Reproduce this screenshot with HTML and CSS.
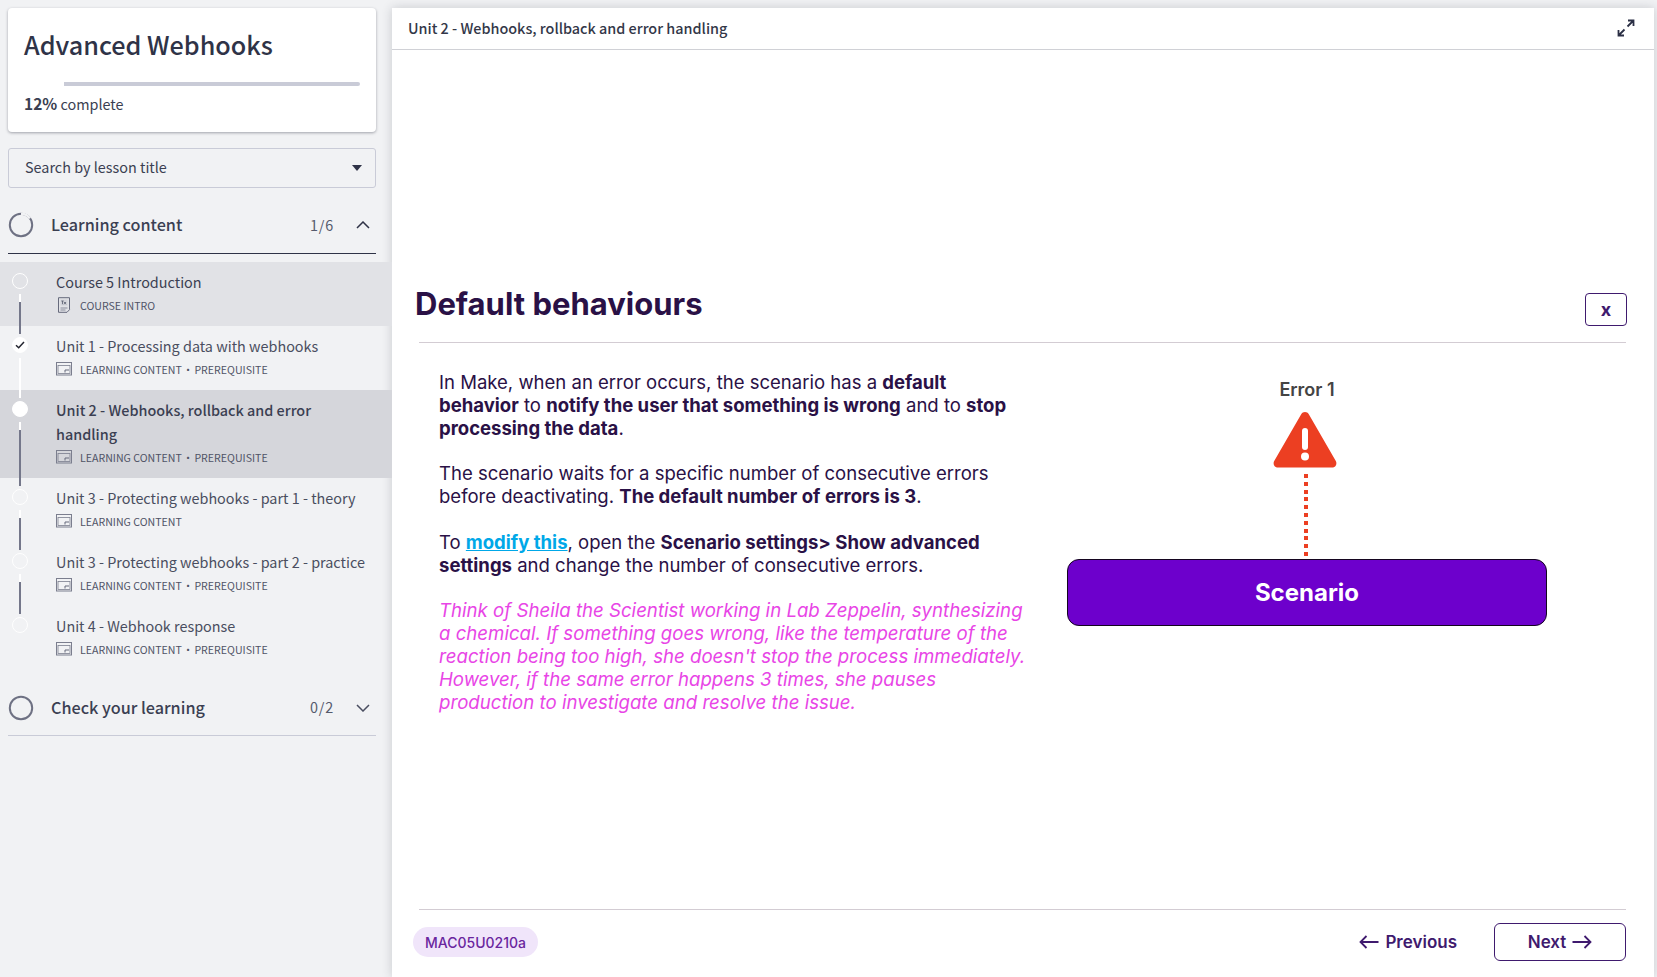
FILE: index.html
```html
<!DOCTYPE html>
<html lang="en">
<head>
<meta charset="utf-8">
<title>Advanced Webhooks</title>
<link rel="stylesheet" href="styles.css">
</head>
<body>
<aside class="sidebar">
  <section class="course-card">
    <h1 class="course-title">Advanced Webhooks</h1>
    <div class="progress"><div class="progress-fill"></div></div>
    <p class="progress-text"><b>12%</b> complete</p>
  </section>
  <div class="search">
    <span class="search-label">Search by lesson title</span>
    <svg class="caret" width="10" height="6" viewBox="0 0 10 6"><path d="M0 0h10L5 6z" fill="#2f3347"/></svg>
  </div>
  <div class="section-head section-open">
    <svg class="ring" width="26" height="26" viewBox="0 0 26 26"><circle cx="13" cy="13" r="11.2" fill="none" stroke="#6e7183" stroke-width="2"/><path d="M13 1.8A11.2 11.2 0 0 1 22 6.4" fill="none" stroke="#f1f2f4" stroke-width="2.4"/></svg>
    <span class="section-name">Learning content</span>
    <span class="section-count">1/6</span>
    <svg class="chev" width="14" height="8" viewBox="0 0 14 8"><path d="M1 7l6-6 6 6" fill="none" stroke="#2f3347" stroke-width="1.5"/></svg>
  </div>
  <ul class="lessons">
    <li class="lesson lesson-hover line-gray">
      <span class="dot"></span>
      <div class="lesson-title">Course 5 Introduction</div>
      <div class="lesson-meta">
        <svg class="meta-icon" width="16" height="16" viewBox="0 0 16 16"><path d="M2.5.7h11v12l-2.5 2.6H2.500z" fill="none" stroke="#666a7c"/><path d="M4.500 11h7M4.500 13h5" stroke="#8a8d9c"/><rect x="4.500" y="2.500" width="7" height="6" fill="#d3d4da"/><path d="M5.300 4h2.400M6.500 4v3.200M8 5l2 2.300M10 5l-2 2.300" stroke="#555a6c" stroke-width=".8"/></svg>
        <span>COURSE INTRO</span>
      </div>
    </li>
    <li class="lesson line-white">
      <span class="dot dot-done"><svg width="10" height="8" viewBox="0 0 10 8"><path d="M1 4.200l2.700 2.600L9 1" fill="none" stroke="#22242f" stroke-width="1.500"/></svg></span>
      <div class="lesson-title lesson-done">Unit 1 - Processing data with webhooks</div>
      <div class="lesson-meta">
        <svg class="meta-icon" width="16" height="14" viewBox="0 0 16 14"><rect x=".5" y=".5" width="15" height="12.500" fill="none" stroke="#7b7e8e"/><rect x="2" y="3.500" width="12" height="8" fill="none" stroke="#7b7e8e" stroke-width=".8"/><path d="M9 10.500V8h4" fill="none" stroke="#666a7c"/></svg>
        <span>LEARNING CONTENT<span class="sep">·</span>PREREQUISITE</span>
      </div>
    </li>
    <li class="lesson lesson-current line-gray">
      <span class="dot dot-current"></span>
      <div class="lesson-title lesson-strong">Unit 2 - Webhooks, rollback and error handling</div>
      <div class="lesson-meta">
        <svg class="meta-icon" width="16" height="14" viewBox="0 0 16 14"><rect x=".5" y=".5" width="15" height="12.500" fill="none" stroke="#7b7e8e"/><rect x="2" y="3.500" width="12" height="8" fill="none" stroke="#7b7e8e" stroke-width=".8"/><path d="M9 10.500V8h4" fill="none" stroke="#666a7c"/></svg>
        <span>LEARNING CONTENT<span class="sep">·</span>PREREQUISITE</span>
      </div>
    </li>
    <li class="lesson line-gray">
      <span class="dot"></span>
      <div class="lesson-title">Unit 3 - Protecting webhooks - part 1 - theory</div>
      <div class="lesson-meta">
        <svg class="meta-icon" width="16" height="14" viewBox="0 0 16 14"><rect x=".5" y=".5" width="15" height="12.500" fill="none" stroke="#7b7e8e"/><rect x="2" y="3.500" width="12" height="8" fill="none" stroke="#7b7e8e" stroke-width=".8"/><path d="M9 10.500V8h4" fill="none" stroke="#666a7c"/></svg>
        <span>LEARNING CONTENT</span>
      </div>
    </li>
    <li class="lesson line-gray">
      <span class="dot"></span>
      <div class="lesson-title">Unit 3 - Protecting webhooks - part 2 - practice</div>
      <div class="lesson-meta">
        <svg class="meta-icon" width="16" height="14" viewBox="0 0 16 14"><rect x=".5" y=".5" width="15" height="12.500" fill="none" stroke="#7b7e8e"/><rect x="2" y="3.500" width="12" height="8" fill="none" stroke="#7b7e8e" stroke-width=".8"/><path d="M9 10.500V8h4" fill="none" stroke="#666a7c"/></svg>
        <span>LEARNING CONTENT<span class="sep">·</span>PREREQUISITE</span>
      </div>
    </li>
    <li class="lesson">
      <span class="dot"></span>
      <div class="lesson-title">Unit 4 - Webhook response</div>
      <div class="lesson-meta">
        <svg class="meta-icon" width="16" height="14" viewBox="0 0 16 14"><rect x=".5" y=".5" width="15" height="12.500" fill="none" stroke="#7b7e8e"/><rect x="2" y="3.500" width="12" height="8" fill="none" stroke="#7b7e8e" stroke-width=".8"/><path d="M9 10.500V8h4" fill="none" stroke="#666a7c"/></svg>
        <span>LEARNING CONTENT<span class="sep">·</span>PREREQUISITE</span>
      </div>
    </li>
  </ul>
  <div class="section-head section-closed">
    <svg class="ring" width="26" height="26" viewBox="0 0 26 26"><circle cx="13" cy="13" r="11.2" fill="none" stroke="#6e7183" stroke-width="2"/></svg>
    <span class="section-name">Check your learning</span>
    <span class="section-count">0/2</span>
    <svg class="chev" width="14" height="8" viewBox="0 0 14 8"><path d="M1 1l6 6 6-6" fill="none" stroke="#4a4e60" stroke-width="1.500"/></svg>
  </div>
</aside>

<main class="viewer">
  <header class="viewer-head">
    <span class="viewer-title">Unit 2 - Webhooks, rollback and error handling</span>
    <svg class="expand" width="18" height="18" viewBox="0 0 18 18"><path d="M10.500 7.500L16 2M11 1.500h5.500V7M7.500 10.500L2 16M7 16.500H1.500V11" fill="none" stroke="#2b2f45" stroke-width="1.800"/></svg>
  </header>
  <div class="slide">
    <div class="slide-head">
      <h2 class="slide-title">Default behaviours</h2>
      <button class="close-btn">x</button>
    </div>
    <div class="slide-body">
      <div class="copy">
        <p>In Make, when an error occurs, the scenario has a <b>default behavior</b> to <b>notify the user that something is wrong</b> and to <b>stop processing the data</b>.</p>
        <p>The scenario waits for a specific number of consecutive errors before deactivating. <b>The default number of errors is 3</b>.</p>
        <p>To <a href="#" class="link">modify this</a>, open the <b>Scenario settings&gt; Show advanced settings</b> and change the number of consecutive errors.</p>
        <p class="aside-note">Think of Sheila the Scientist working in Lab Zeppelin, synthesizing a chemical. If something goes wrong, like the temperature of the reaction being too high, she doesn't stop the process immediately. However, if the same error happens 3 times, she pauses production to investigate and resolve the issue.</p>
      </div>
      <div class="diagram">
        <div class="error-label">Error 1</div>
        <svg class="warn" width="64" height="56" viewBox="0 0 64 56"><path d="M28.200 2.200a4.400 4.400 0 0 1 7.600 0l27 46.800a4.400 4.400 0 0 1-3.800 6.600H5a4.400 4.400 0 0 1-3.800-6.600z" fill="#ec3f22"/><rect x="29" y="16" width="6" height="22" rx="3" fill="#fff"/><circle cx="32" cy="44.500" r="4" fill="#fff"/></svg>
        <div class="dots"></div>
        <div class="scenario">Scenario</div>
      </div>
    </div>
  </div>
  <footer class="viewer-foot">
    <span class="code-pill">MAC05U0210a</span>
    <div class="nav">
      <button class="nav-btn">
        <svg class="arrow" width="20" height="14" viewBox="0 0 20 14"><path d="M19.500 7H1.500M7.500 1L1.500 7l6 6" fill="none" stroke="#3f1a6e" stroke-width="1.800"/></svg>
        Previous
      </button>
      <button class="nav-btn nav-next">
        Next
        <svg class="arrow" width="20" height="14" viewBox="0 0 20 14"><path d="M.5 7h18M12.500 1l6 6-6 6" fill="none" stroke="#3f1a6e" stroke-width="1.800"/></svg>
      </button>
    </div>
  </footer>
</main>
</body>
</html>
```
FILE: styles.css
```css
* { box-sizing: border-box; }
html, body { height: 100%; }
body {
  margin: 0;
  display: flex;
  height: 977px;
  overflow: hidden;
  background: #f1f2f4;
  font-family: "Noto Sans CJK SC", "Noto Sans", sans-serif;
  color: #2f3347;
}
.sidebar { width: 392px; flex: none; padding-top: 8px; }
.course-card {
  margin: 0 16px 16px 8px;
  height: 124px;
  padding: 16px 16px 0;
  background: #fff;
  border-radius: 4px;
  box-shadow: 0 1px 3px rgba(40, 44, 60, .4);
}
.course-title { margin: 0; font-size: 25.200px; line-height: 40px; font-weight: 500; color: #2f3347; }
.progress { height: 4px; margin-top: 18px; background: #c9cbd7; border-radius: 2px; }
.progress-fill { width: 12%; height: 100%; background: #fff; }
.progress-text { margin: 5px 0 0; font-size: 14.400px; line-height: 24px; color: #3b3f52; }
.progress-text b { font-size: 15.500px; font-weight: 600; }
.search {
  margin: 0 16px 0 8px;
  height: 40px;
  padding: 0 13px 0 16px;
  display: flex;
  align-items: center;
  justify-content: space-between;
  border: 1px solid #c9cbd7;
  border-radius: 3px;
  font-size: 14.400px;
  color: #3b3f52;
}
.search-label { margin-bottom: 3px; }
.section-head {
  margin: 0 16px 0 8px;
  height: 66px;
  display: flex;
  align-items: center;
  border-bottom: 1px solid #c9cbd7;
}
.section-open { border-bottom-color: #2f3347; margin-bottom: 8px; padding-top: 9px; }
.section-closed { padding-top: 10px; }
.ring { flex: none; margin-right: 17px; }
.section-name { flex: 1; margin-bottom: 2px; font-size: 16.200px; font-weight: 500; color: #3b3f52; }
.section-count { margin: 0 22px 2px 0; font-size: 14.400px; letter-spacing: .8px; color: #555a6c; }
.chev { flex: none; margin-right: 6px; }
.lessons { margin: 0; padding: 0; list-style: none; }
.lesson { position: relative; padding: 8px 24px 11px 56px; }
.lesson-hover { background: #e1e2e6; }
.lesson-current { background: #d5d6db; }
.dot {
  position: absolute;
  top: 11px;
  left: 12px;
  width: 16px;
  height: 16px;
  display: flex;
  align-items: center;
  justify-content: center;
  border-radius: 50%;
  border: 1px solid #fff;
}
.dot-done, .dot-current { background: #fff; }
.line-gray::after, .line-white::after {
  content: "";
  position: absolute;
  left: 19px;
  top: 32px;
  bottom: -8px;
  width: 2px;
  z-index: 1;
}
.line-gray::after { background: linear-gradient(#fff 8px, #74778a 8px); }
.line-white::after { background: #fff; }
.lesson-title { font-size: 14.400px; line-height: 24px; color: #4a4e60; }
.lesson-hover .lesson-title { color: #3b3f52; }
.lesson-strong { font-weight: 500; color: #3b3f52; }
.lesson-meta { display: flex; align-items: center; gap: 8px; height: 20px; margin-top: 1px; font-size: 10.600px; color: #4f5366; }
.sep { margin: 0 1px; }
.meta-icon { flex: none; }

.viewer {
  flex: 1;
  margin: 8px 3px 0 0;
  display: flex;
  flex-direction: column;
  background: #fff;
  box-shadow: 0 0 10px rgba(40, 44, 60, .2);
  font-family: Inter, sans-serif;
}
.viewer-head {
  flex: none;
  height: 42px;
  padding: 0 19px 1px 16px;
  display: flex;
  align-items: center;
  justify-content: space-between;
  border-bottom: 1px solid #d0d1d6;
}
.viewer-title { margin-bottom: 2px; font-family: "Noto Sans CJK SC", sans-serif; font-size: 14.400px; font-weight: 500; color: #333748; }
.slide { flex: 1; padding: 235px 28px 0 27px; }
.slide-head {
  display: flex;
  justify-content: space-between;
  align-items: flex-start;
  height: 58px;
  border-bottom: 1px solid #d3ccd3;
}
.slide-title { margin: -3px 0 0 -4px; font-size: 31px; line-height: 44px; font-weight: 700; color: #2a1146; }
.close-btn {
  width: 42px;
  height: 33px;
  margin: 8px -1px 0 0;
  background: #fff;
  border: 1.5px solid #3f1a6e;
  border-radius: 4px;
  font-family: Inter, sans-serif;
  font-size: 18px;
  font-weight: 700;
  color: #3f1a6e;
}
.slide-body { display: flex; padding-top: 28px; }
.copy { width: 588px; margin-left: 20px; flex: none; font-size: 18.550px; line-height: 22.850px; color: #2a1146; }
.copy p { margin: 0 0 22.850px; }
.copy b { font-weight: 700; }
.link { color: #00a8e8; font-weight: 700; }
.copy .aside-note { font-style: italic; font-size: 18.650px; color: #e845e6; }
.diagram { flex: none; width: 480px; margin: 0 0 0 40px; display: flex; flex-direction: column; align-items: center; padding-top: 7px; }
.error-label { font-size: 18px; line-height: 24px; font-weight: 600; color: #444; }
.warn { margin: 10px 0 0 -4px; display: block; }
.dots { width: 4px; height: 82px; margin: 6px 0 3px -3px; background: repeating-linear-gradient(#ec3f22 0 4px, transparent 4px 7.800px); }
.scenario {
  width: 480px;
  height: 67px;
  display: flex;
  align-items: center;
  justify-content: center;
  background: #6d00cc;
  border: 1px solid #14041f;
  border-radius: 12px;
  font-size: 24px;
  font-weight: 700;
  color: #fff;
}
.viewer-foot {
  flex: none;
  height: 68px;
  margin: 0 28px 0 27px;
  display: flex;
  align-items: flex-start;
  justify-content: space-between;
  border-top: 1px solid #d3ccd3;
}
.code-pill {
  margin: 17px 0 0 -6px;
  height: 30px;
  padding: 0 12px;
  display: flex;
  align-items: center;
  background: #f0e5fa;
  border-radius: 15px;
  font-size: 14px;
  font-weight: 500;
  color: #6a259e;
}
.nav { display: flex; gap: 37px; margin-top: 13px; }
.nav-btn {
  height: 38px;
  padding: 0;
  display: flex;
  align-items: center;
  justify-content: center;
  gap: 6px;
  background: none;
  border: 0;
  font-family: Inter, sans-serif;
  font-size: 17px;
  font-weight: 600;
  color: #3f1a6e;
}
.nav-next { width: 132px; border: 1.5px solid #3f1a6e; border-radius: 6px; }
.arrow { flex: none; }
```
